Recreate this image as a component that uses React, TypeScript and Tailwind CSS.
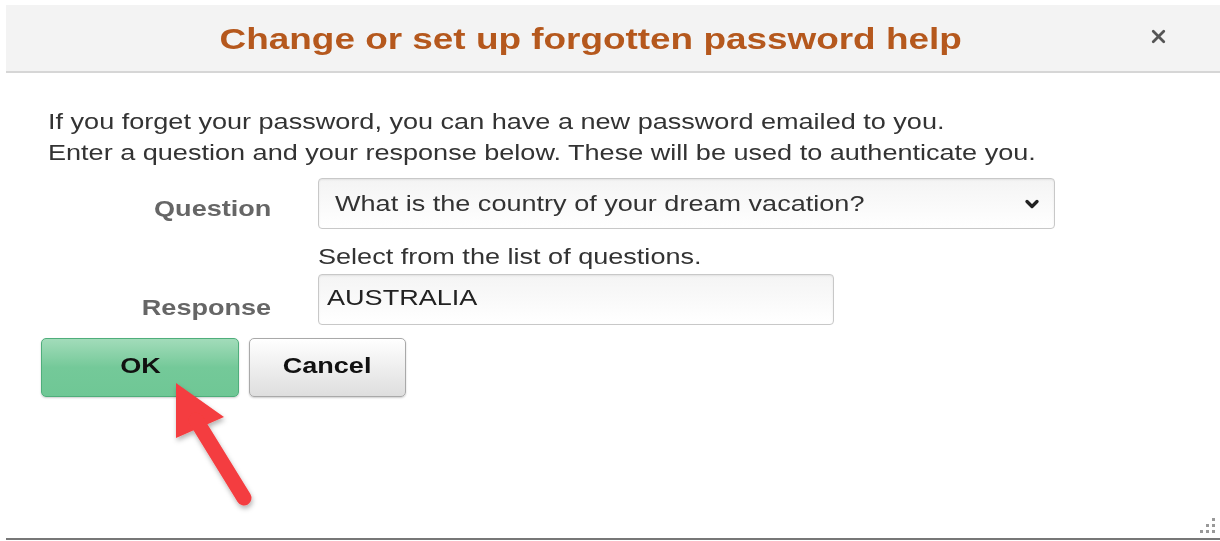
import type { ReactNode } from "react";
import { ChevronDown, X } from "lucide-react";

const font = { fontFamily: '"Liberation Sans", Arial, sans-serif' };

// the dialog renders its text a little wide; keep glyphs stretched the same way
function Wide({ children, className = "" }: { children: ReactNode; className?: string }) {
    return <span className={`inline-block scale-x-[1.23] whitespace-nowrap ${className}`}>{children}</span>;
}

function PointerArrow() {
    return (
        <svg
            className="pointer-events-none absolute left-[160px] top-[375px]"
            width="110"
            height="140"
            viewBox="160 375 110 140"
        >
            <defs>
                <filter id="arrowShadow" x="-30%" y="-30%" width="160%" height="160%">
                    <feDropShadow dx="1" dy="3" stdDeviation="2.5" floodColor="#000" floodOpacity="0.3" />
                </filter>
            </defs>
            <g filter="url(#arrowShadow)" fill="#f43d3f">
                <polygon points="176,383 176,438 224,417" />
                <line x1="196" y1="420" x2="244" y2="498" stroke="#f43d3f" strokeWidth="15" strokeLinecap="round" />
            </g>
        </svg>
    );
}

export default function App() {
    return (
        <div className="relative h-[541px] w-[1220px] overflow-hidden bg-white pl-[6px] pt-[5px]" style={font}>
            {/* title bar */}
            <div className="relative flex h-[68px] items-center justify-center border-b-2 border-[#d6d6d6] bg-[#f3f3f3]">
                <h1 className="ml-[-44px] text-[30px] font-bold text-[#b5581d]">
                    <Wide className="origin-center scale-x-[1.21]">Change or set up forgotten password help</Wide>
                </h1>
                <button className="absolute right-[51px] top-[21px] text-[#555]">
                    <X className="h-[21px] w-[21px]" strokeWidth={3.2} />
                </button>
            </div>

            <div className="pl-[42px] pt-[33px] text-[#333]">
                <p className="text-[22px] leading-[31px]">
                    <Wide className="origin-left">If you forget your password, you can have a new password emailed to you.</Wide>
                    <br />
                    <Wide className="origin-left">Enter a question and your response below. These will be used to authenticate you.</Wide>
                </p>

                <div className="mt-[10px] grid grid-cols-[223px_auto] gap-x-[47px]">
                    <label className="pt-[14px] text-right text-[22px] font-bold text-[#666]">
                        <Wide className="origin-right">Question</Wide>
                    </label>
                    <div className="flex h-[51px] w-[737px] items-center justify-between rounded-[4px] border border-[#c8c8c8] bg-gradient-to-b from-[#f4f4f4] to-white pl-[16px] pr-[12px] shadow-[inset_0_1px_2px_rgba(0,0,0,0.08)]">
                        <span className="text-[22px] text-[#333]">
                            <Wide className="origin-left">What is the country of your dream vacation?</Wide>
                        </span>
                        <ChevronDown className="h-[20px] w-[20px] text-[#222]" strokeWidth={4} />
                    </div>

                    <div />
                    <p className="pt-[15px] text-[22px] leading-[26px]">
                        <Wide className="origin-left">Select from the list of questions.</Wide>
                    </p>

                    <label className="pt-[21px] text-right text-[22px] font-bold text-[#666]">
                        <Wide className="origin-right">Response</Wide>
                    </label>
                    <div className="mt-[4px] flex h-[51px] w-[516px] items-center rounded-[4px] border border-[#c8c8c8] bg-gradient-to-b from-[#f4f4f4] to-white pl-[8px] shadow-[inset_0_1px_2px_rgba(0,0,0,0.08)]">
                        <span className="pb-[4px] text-[22px] text-[#222]">
                            <Wide className="origin-left">AUSTRALIA</Wide>
                        </span>
                    </div>
                </div>
            </div>

            <div className="ml-[35px] mt-[13px] flex gap-[10px]">
                <button className="h-[59px] w-[198px] rounded-[5px] border border-[#4fae7b] bg-gradient-to-b from-[#a2dcba] via-[#74c999] to-[#6fc795] pb-[4px] text-[22px] font-bold text-[#111] shadow-[0_1px_2px_rgba(0,0,0,0.2)]">
                    <Wide className="origin-center">OK</Wide>
                </button>
                <button className="h-[59px] w-[157px] rounded-[5px] border border-[#a9a9a9] bg-gradient-to-b from-white to-[#dedede] pb-[4px] text-[22px] font-bold text-[#111] shadow-[0_1px_2px_rgba(0,0,0,0.2)]">
                    <Wide className="origin-center">Cancel</Wide>
                </button>
            </div>

            <PointerArrow />

            {/* bottom edge and resize grip */}
            <div className="absolute bottom-[1px] left-[6px] right-0 h-[2px] bg-[#777]" />
            <div className="absolute bottom-[8px] right-[5px] grid grid-cols-3 gap-[3px]">
                <span />
                <span />
                <span className="h-[3px] w-[3px] bg-[#999]" />
                <span />
                <span className="h-[3px] w-[3px] bg-[#999]" />
                <span className="h-[3px] w-[3px] bg-[#999]" />
                <span className="h-[3px] w-[3px] bg-[#999]" />
                <span className="h-[3px] w-[3px] bg-[#999]" />
                <span className="h-[3px] w-[3px] bg-[#999]" />
            </div>
        </div>
    );
}
